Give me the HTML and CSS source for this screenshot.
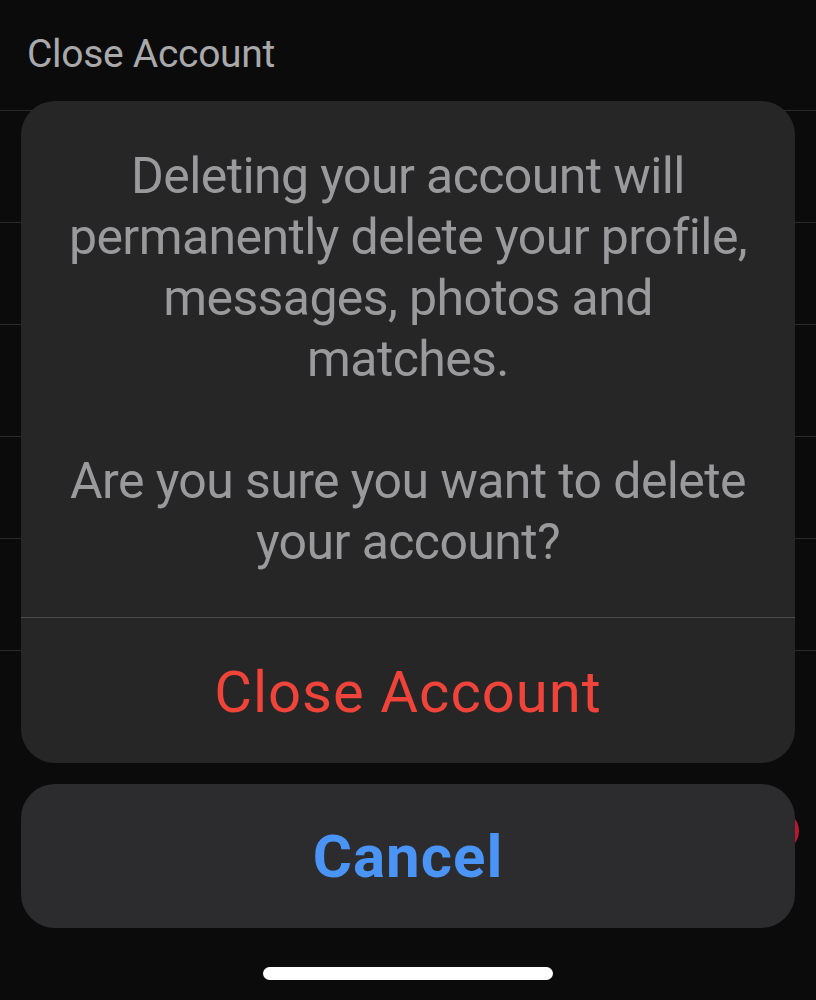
FILE: index.html
```html
<!DOCTYPE html>
<html lang="en">
<head>
  <meta charset="UTF-8">
  <title>Close Account</title>
  <link rel="stylesheet" href="styles.css">
</head>
<body>

  <div class="settings">
    <div class="row row-title">Close Account</div>
    <div class="row row-tall"></div>
    <div class="row row-short"></div>
    <div class="row row-tall"></div>
    <div class="row row-short"></div>
    <div class="row row-tall"></div>
    <div class="row row-bottom">
      <span class="dot"></span>
    </div>
  </div>

  <div class="sheet">
    <div class="group">
      <p class="message">
        Deleting your account will permanently delete your profile, messages, photos and matches.
      </p>
      <p class="message">
        Are you sure you want to delete your account?
      </p>
      <button class="action destructive">Close Account</button>
    </div>
    <button class="action cancel">Cancel</button>
  </div>

  <div class="home-bar"></div>

</body>
</html>
```

FILE: styles.css
```css
body {
  margin: 0;
  width: 816px;
  height: 1000px;
  background: #0b0b0c;
  font-family: Roboto, "Liberation Sans", sans-serif;
  position: relative;
  overflow: hidden;
}

/* settings list behind the sheet */
.settings {
  display: flex;
  flex-direction: column;
}
.row {
  border-bottom: 1px solid #2a2a2c;
  box-sizing: border-box;
}
.row-title {
  height: 111px;
  padding: 31px 0 0 27px;
  color: #a9a9ab;
  font-size: 39px;
  letter-spacing: -0.3px;
}
.row-tall {
  height: 112px;
}
.row-short {
  height: 102px;
}
.row-bottom {
  height: 300px;
  border-bottom: none;
  position: relative;
}
.dot {
  position: absolute;
  right: 17px;
  top: 160px;
  width: 40px;
  height: 40px;
  border-radius: 50%;
  background: #b8182f;
}

/* action sheet */
.sheet {
  position: absolute;
  left: 21px;
  top: 101px;
  width: 774px;
  display: flex;
  flex-direction: column;
  gap: 21px;
}
.group {
  background: #262627;
  border-radius: 34px;
  overflow: hidden;
  display: flex;
  flex-direction: column;
  padding-top: 45px;
}
.message {
  margin: 0 0 61px;
  padding: 0 40px;
  text-align: center;
  color: #9a9a9c;
  font-size: 50px;
  line-height: 61px;
  letter-spacing: -0.6px;
}
.message + .message {
  margin-bottom: 44px;
}
.action {
  border: none;
  background: none;
  font-family: inherit;
  text-align: center;
  cursor: pointer;
}
.destructive {
  height: 146px;
  padding-top: 4px;
  border-top: 1px solid #4a4a4c;
  color: #f0443a;
  font-size: 58px;
  letter-spacing: 1px;
}
.cancel {
  height: 144px;
  background: #2c2c2e;
  border-radius: 34px;
  color: #4a94f6;
  font-size: 60px;
  font-weight: bold;
  letter-spacing: 1px;
}

.home-bar {
  position: absolute;
  left: 263px;
  top: 967px;
  width: 290px;
  height: 13px;
  border-radius: 7px;
  background: #ffffff;
}
```
